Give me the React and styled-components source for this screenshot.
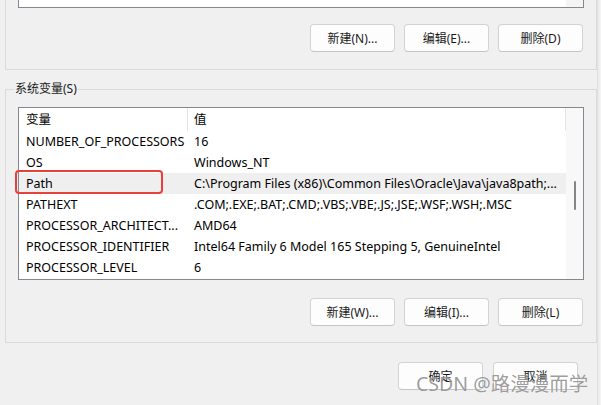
import React from 'react';
import styled, { createGlobalStyle } from 'styled-components';

const GlobalStyle = createGlobalStyle`
  html, body {
    margin: 0;
    padding: 0;
    background: #f0f0f0;
  }
  body {
    font-family: "Noto Sans", "Noto Sans CJK SC", sans-serif;
    font-size: 12px;
    color: #000;
  }
`;

const Dialog = styled.div`
  position: relative;
  width: 601px;
  height: 405px;
  overflow: hidden;
  background: #f0f0f0;
  box-sizing: border-box;
  padding: 0 0 0 5px;
`;

const EdgeLine = styled.div`
  position: absolute;
  top: 0;
  right: 0;
  width: 4px;
  height: 100%;
  background: linear-gradient(to right, #d9d9d9 0, #e9e9e9 1px, #f6f6f6 4px);
`;

const UpperGroup = styled.div`
  width: 592px;
  height: 70px;
  box-sizing: border-box;
  border: 1px solid #dadada;
  border-top: none;
  padding: 0 12px 0 12px;
`;

const ClippedList = styled.div`
  height: 8px;
  box-sizing: border-box;
  border: 1px solid #828790;
  border-top: none;
  background: #fff;
  display: flex;
  overflow: hidden;
`;

const ClippedRows = styled.div`
  flex: 1;
  display: flex;
  align-items: flex-end;
  overflow: hidden;
`;

const ClippedCell = styled.div`
  width: ${(p) => p.$w || 'auto'};
  flex: ${(p) => (p.$w ? 'none' : 1)};
  padding-left: ${(p) => p.$pad}px;
  font-size: 12.5px;
  line-height: 15px;
  margin-bottom: 7px;
  white-space: nowrap;
`;

const ButtonRow = styled.div`
  display: flex;
  justify-content: flex-end;
  gap: ${(p) => p.$gap || 9}px;
  margin-top: ${(p) => p.$top}px;
  padding-right: ${(p) => p.$right || 0}px;
`;

const Button = styled.button`
  width: 85px;
  height: 28px;
  box-sizing: border-box;
  border: 1px solid #d3d3d3;
  border-bottom-color: #c4c4c4;
  border-radius: 4px;
  background: #fdfdfd;
  font-family: "Noto Sans", "Noto Sans CJK SC", sans-serif;
  font-size: 12px;
  color: #1a1a1a;
  padding: 0;
`;

const Group = styled.fieldset`
  margin: 11px 0 0 0;
  width: 592px;
  min-inline-size: 0;
  box-sizing: border-box;
  border: 1px solid #dadada;
  padding: 10px 12px 16px 12px;
`;

const Legend = styled.legend`
  margin-left: -4px;
  padding: 0 1px;
  font-size: 12px;
  line-height: 16px;
  color: #1a1a1a;
`;

const ListBox = styled.div`
  height: 173px;
  box-sizing: border-box;
  border: 1px solid #828790;
  background: #fff;
  display: flex;
  font-size: 12.5px;
`;

const Rows = styled.div`
  flex: 1;
  display: flex;
  flex-direction: column;
  min-width: 0;
`;

const Header = styled.div`
  height: 23px;
  display: flex;
  border-right: 1px solid #e5e5e5;
`;

const HeaderCell = styled.div`
  width: ${(p) => (p.$first ? '161px' : 'auto')};
  flex: ${(p) => (p.$first ? 'none' : 1)};
  padding-left: ${(p) => (p.$first ? 7 : 6)}px;
  line-height: 23px;
  border-right: ${(p) => (p.$first ? '1px solid #e5e5e5' : 'none')};
`;

const Row = styled.div`
  height: 21px;
  display: flex;
  align-items: center;
  background: ${(p) => (p.$selected ? '#efefef' : '#fff')};
  white-space: nowrap;
`;

const NameCell = styled.div`
  width: 162px;
  padding-left: 7px;
  flex: none;
  overflow: hidden;
`;

const ValueCell = styled.div`
  flex: 1;
  padding-left: 6px;
  overflow: hidden;
`;

const Scrollbar = styled.div`
  width: 17px;
  flex: none;
  background: #f8f8f8;
  display: flex;
  justify-content: center;
`;

const ScrollTrack = styled.div`
  width: 17px;
  background: #f4f4f4;
`;

const Thumb = styled.div`
  width: 2px;
  height: 29px;
  margin-top: 73px;
  margin-left: 1px;
  border-radius: 1px;
  background: #858585;
`;

const Highlight = styled.div`
  position: absolute;
  left: 15px;
  top: 170px;
  width: 148px;
  height: 24px;
  box-sizing: border-box;
  border: 2px solid #e8403a;
  border-radius: 4px;
`;

const Watermark = styled.div`
  position: absolute;
  left: 416px;
  top: 371px;
  font-family: "Noto Sans", "Noto Sans CJK SC", sans-serif;
  font-size: 19.5px;
  line-height: 26px;
  color: rgba(125, 125, 125, 0.75);
  text-shadow: 0 0 1px rgba(255, 255, 255, 0.8);
  white-space: nowrap;
`;

const vars = [
  ['NUMBER_OF_PROCESSORS', '16'],
  ['OS', 'Windows_NT'],
  ['Path', 'C:\\Program Files (x86)\\Common Files\\Oracle\\Java\\java8path;...'],
  ['PATHEXT', '.COM;.EXE;.BAT;.CMD;.VBS;.VBE;.JS;.JSE;.WSF;.WSH;.MSC'],
  ['PROCESSOR_ARCHITECT...', 'AMD64'],
  ['PROCESSOR_IDENTIFIER', 'Intel64 Family 6 Model 165 Stepping 5, GenuineIntel'],
  ['PROCESSOR_LEVEL', '6'],
];

export default function App() {
  return (
    <>
      <GlobalStyle />
      <Dialog>
        <UpperGroup>
          <ClippedList>
            <ClippedRows>
              <ClippedCell $w="162px" $pad={7}>JAVA_HOME_PATH</ClippedCell>
              <ClippedCell $pad={6}>C:\Users\admin\AppData\Local\Temp;p</ClippedCell>
            </ClippedRows>
            <ScrollTrack />
          </ClippedList>
          <ButtonRow $top={16} $right={1}>
            <Button>新建(N)...</Button>
            <Button>编辑(E)...</Button>
            <Button>删除(D)</Button>
          </ButtonRow>
        </UpperGroup>

        <Group>
          <Legend>系统变量(S)</Legend>
          <ListBox>
            <Rows>
              <Header>
                <HeaderCell $first>变量</HeaderCell>
                <HeaderCell>值</HeaderCell>
              </Header>
              {vars.map(([name, value]) => (
                <Row key={name} $selected={name === 'Path'}>
                  <NameCell>{name}</NameCell>
                  <ValueCell>{value}</ValueCell>
                </Row>
              ))}
            </Rows>
            <Scrollbar>
              <Thumb />
            </Scrollbar>
          </ListBox>
          <ButtonRow $top={18} $right={1}>
            <Button>新建(W)...</Button>
            <Button>编辑(I)...</Button>
            <Button>删除(L)</Button>
          </ButtonRow>
        </Group>

        <ButtonRow $top={19} $right={23} $gap={10}>
          <Button>确定</Button>
          <Button>取消</Button>
        </ButtonRow>

        <Highlight />
        <Watermark>CSDN @路漫漫而学</Watermark>
        <EdgeLine />
      </Dialog>
    </>
  );
}
